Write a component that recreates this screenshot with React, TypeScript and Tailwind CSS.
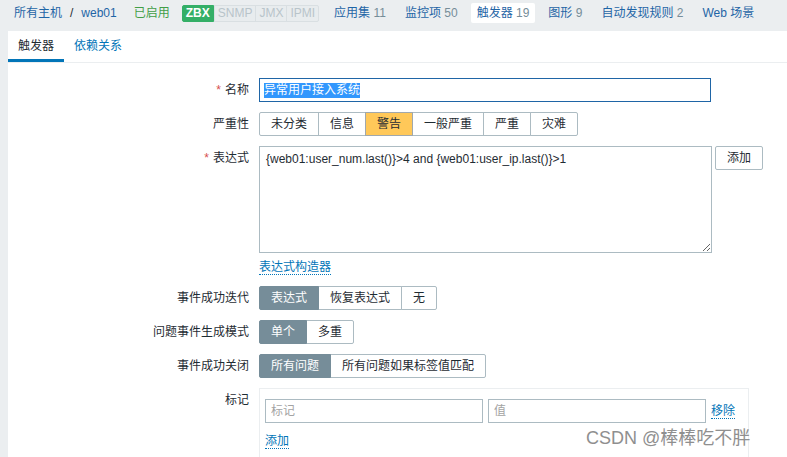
import clsx from 'clsx'

const font = "font-['Liberation_Sans','Noto_Sans_CJK_SC',sans-serif]"

interface SegProps {
  items: string[]
  active: number
  activeCls: string
}

// segmented radio buttons, zabbix style
const Segmented = ({ items, active, activeCls }: SegProps) => (
  <div className="flex h-6">
    {items.map((t, i) => (
      <span
        key={t}
        className={clsx(
          'h-6 px-[11px] border leading-[22px] whitespace-nowrap',
          i > 0 && '-ml-px',
          i === 0 && 'rounded-l-[2px]',
          i === items.length - 1 && 'rounded-r-[2px]',
          i === active ? clsx('relative z-10', activeCls) : 'bg-white border-[#acbbc2] text-[#1f2c33]'
        )}
      >
        {t}
      </span>
    ))}
  </div>
)

const Label = ({ text, required }: { text: string; required?: boolean }) => (
  <div className="h-6 leading-6 text-right text-[#1f2c33] whitespace-nowrap">
    {required && <span className="text-[#d64e4e] mr-[4px]">*</span>}
    {text}
  </div>
)

const NavItem = ({ text, count, active }: { text: string; count?: string; active?: boolean }) => (
  <span
    className={clsx(
      'h-5 leading-5 px-[6px] rounded-[2px] whitespace-nowrap',
      active && 'bg-white'
    )}
  >
    <span className="text-[#1f65a6]">{text}</span>
    {count && <span className="text-[#768d99]"> {count}</span>}
  </span>
)

const App = () => {
  return (
    <div className={clsx(font, 'relative w-[787px] h-[457px] overflow-hidden bg-[#ebeef0] text-[12px] flex flex-col')}>
      {/* host header */}
      <div className="flex items-start h-[31px] pt-[3px] pl-[8px] shrink-0">
        <span className="h-5 leading-5 px-[6px] text-[#1f65a6] whitespace-nowrap">
          所有主机<span className="text-[#1f2c33] mx-[8px]">/</span>web01
        </span>
        <span className="h-5 leading-5 ml-[5px] px-[6px] text-[#429e47]">已启用</span>
        <div className="flex ml-[6px] mt-[2px] h-[17px] leading-[15px] text-[12px] font-bold">
          <span className="px-[3px] bg-[#34af67] border border-[#34af67] text-white rounded-l-[2px]">ZBX</span>
          <span className="px-[3px] border border-[#d9dfe2] text-[#b8c4ca] bg-[#e8ecee] font-normal">SNMP</span>
          <span className="-ml-px px-[3px] border border-[#d9dfe2] text-[#b8c4ca] bg-[#e8ecee] font-normal">JMX</span>
          <span className="-ml-px px-[3px] border border-[#d9dfe2] text-[#b8c4ca] bg-[#e8ecee] rounded-r-[2px] font-normal">
            IPMI
          </span>
        </div>
        <div className="flex ml-[9px] gap-[7px]">
          <NavItem text="应用集" count="11" />
          <NavItem text="监控项" count="50" />
          <NavItem text="触发器" count="19" active />
          <NavItem text="图形" count="9" />
          <NavItem text="自动发现规则" count="2" />
          <NavItem text="Web 场景" />
        </div>
      </div>

      {/* panel */}
      <div className="ml-[8px] flex-1 bg-white">
        <div className="flex h-[32px] border-b border-[#ebeef0]">
          <span className="h-[31px] px-[10px] pt-[8px] leading-[14px] border-b-[3px] border-[#0275b8] text-[#1f2c33]">
            触发器
          </span>
          <span className="h-[31px] px-[10px] pt-[8px] leading-[14px] text-[#0275b8]">依赖关系</span>
        </div>

        <div className="grid grid-cols-[241px_1fr] gap-x-[10px] gap-y-[10px] pt-[15px]">
          <Label text="名称" required />
          <div className="w-[452px] h-6 border border-[#1f65a6] px-[4px] flex items-center">
            <span className="bg-[#3297fd] text-white leading-[15px]">异常用户接入系统</span>
          </div>

          <Label text="严重性" />
          <Segmented
            items={['未分类', '信息', '警告', '一般严重', '严重', '灾难']}
            active={2}
            activeCls="bg-[#ffc859] border-[#a0a8ad] text-[#1f2c33]"
          />

          <Label text="表达式" required />
          <div>
            <div className="flex gap-[3px] items-start">
              <textarea
                readOnly
                defaultValue="{web01:user_num.last()}>4 and {web01:user_ip.last()}>1"
                className="w-[453px] h-[107px] border border-[#acbbc2] px-[6px] py-[5px] leading-[14px] text-[12px] text-[#1f2c33] outline-none resize-y"
              />
              <span className="h-6 leading-[22px] px-[11px] border border-[#acbbc2] rounded-[2px] text-[#1f2c33] bg-white">
                添加
              </span>
            </div>
            <span className="inline-block mt-[7px] leading-[14px] text-[#0275b8] border-b border-dotted border-[#0275b8]">
              表达式构造器
            </span>
          </div>

          <Label text="事件成功迭代" />
          <Segmented
            items={['表达式', '恢复表达式', '无']}
            active={0}
            activeCls="bg-[#768d99] border-[#768d99] text-white"
          />

          <Label text="问题事件生成模式" />
          <Segmented items={['单个', '多重']} active={0} activeCls="bg-[#768d99] border-[#768d99] text-white" />

          <Label text="事件成功关闭" />
          <Segmented
            items={['所有问题', '所有问题如果标签值匹配']}
            active={0}
            activeCls="bg-[#768d99] border-[#768d99] text-white"
          />

          <Label text="标记" />
          <div className="w-[490px] h-[90px] border border-[#ebeef0] px-[5px] pt-[10px]">
            <div className="flex items-center gap-[5px]">
              <input
                placeholder="标记"
                className="w-[218px] h-[24px] border border-[#acbbc2] px-[5px] text-[12px] outline-none placeholder:text-[#a3a3a3]"
              />
              <input
                placeholder="值"
                className="w-[218px] h-[24px] border border-[#acbbc2] px-[5px] text-[12px] outline-none placeholder:text-[#a3a3a3]"
              />
              <span className="leading-[14px] text-[#0275b8] border-b border-dotted border-[#0275b8]">移除</span>
            </div>
            <span className="inline-block mt-[11px] leading-[14px] text-[#0275b8] border-b border-dotted border-[#0275b8]">
              添加
            </span>
          </div>
        </div>
      </div>

      {/* watermark */}
      <div className="absolute left-[586px] top-[426px] text-[18px] leading-[24px] text-[#8f8f8f] whitespace-nowrap [text-shadow:0_0_2px_#fff]">
        CSDN @棒棒吃不胖
      </div>
    </div>
  )
}

export default App
